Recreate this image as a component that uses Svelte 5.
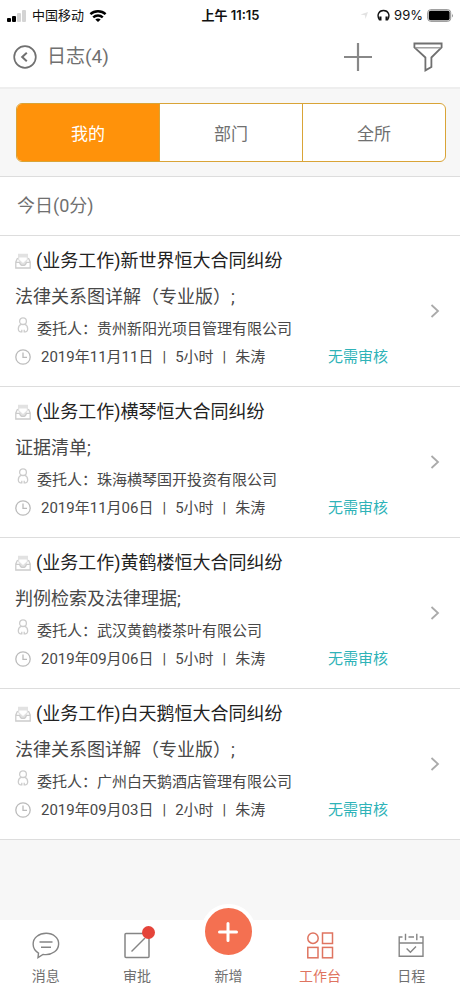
<script>
  const tabs = ['我的', '部门', '全所'];
  let active = $state(0);

  const logs = [
    { title: '(业务工作)新世界恒大合同纠纷', desc: '法律关系图详解（专业版）;', client: '贵州新阳光项目管理有限公司', date: '2019年11月11日', hours: '5小时' },
    { title: '(业务工作)横琴恒大合同纠纷', desc: '证据清单;', client: '珠海横琴国开投资有限公司', date: '2019年11月06日', hours: '5小时' },
    { title: '(业务工作)黄鹤楼恒大合同纠纷', desc: '判例检索及法律理据;', client: '武汉黄鹤楼茶叶有限公司', date: '2019年09月06日', hours: '5小时' },
    { title: '(业务工作)白天鹅恒大合同纠纷', desc: '法律关系图详解（专业版）;', client: '广州白天鹅酒店管理有限公司', date: '2019年09月03日', hours: '2小时' },
  ];
</script>

<div class="page">
  <div class="status">
    <div class="carrier">
      <svg width="20" height="14" viewBox="0 0 20 14">
        <rect x="0" y="9" width="4" height="4" rx="1" fill="#000" />
        <rect x="5" y="7" width="4" height="6" rx="1" fill="#000" />
        <rect x="10" y="4" width="4" height="9" rx="1" fill="#d4d4d4" />
        <rect x="15" y="1" width="4" height="12" rx="1" fill="#d4d4d4" />
      </svg>
      <span class="network">中国移动</span>
      <svg width="18" height="14" viewBox="0 0 18 14" fill="none" stroke="#000" stroke-width="2.4">
        <path d="M1.4 5.2C5.6 1.2 12.4 1.2 16.6 5.2" />
        <path d="M4.2 8.4C6.9 5.9 11.1 5.9 13.8 8.4" />
        <path d="M9 13 6.3 10.4C7.8 9.1 10.2 9.1 11.7 10.4Z" fill="#000" stroke="none" />
      </svg>
    </div>
    <div class="time">上午 11:15</div>
    <div class="power">
      <svg width="9" height="9" viewBox="0 0 9 9"><path d="M0.5 3.5 8 1 5.5 8 5 4.2Z" fill="#e2e2e2" /></svg>
      <svg class="phones" width="13" height="13" viewBox="0 0 13 13" fill="none" stroke="#111" stroke-width="1.4">
        <path d="M2.6 11C-.6 6.4 1.6 1.5 6.5 1.5S13.6 6.4 10.4 11" />
        <path d="M3.4 7.4v4M9.6 7.4v4" stroke-width="2.2" />
      </svg>
      <span>99%</span>
      <svg width="27" height="13" viewBox="0 0 27 13">
        <rect x=".7" y=".7" width="23" height="11.6" rx="3" fill="none" stroke="#8a8a8a" />
        <rect x="1.8" y="1.8" width="20.8" height="9.4" rx="1.8" fill="#000" />
        <path d="M25 4.5q1.6 2 0 4z" fill="#8a8a8a" />
      </svg>
    </div>
  </div>

  <header>
    <button aria-label="返回">
      <svg width="24" height="24" viewBox="0 0 24 24" fill="none" stroke="#707070">
        <circle cx="12" cy="12" r="10.8" stroke-width="1.7" />
        <path d="M13.8 7.8 9.2 12l4.6 4.2" stroke-width="2" />
      </svg>
    </button>
    <h1>日志(4)</h1>
    <button aria-label="新建">
      <svg width="28" height="28" viewBox="0 0 28 28" stroke="#888" stroke-width="2.2"><path d="M14 0v28M0 14h28" /></svg>
    </button>
    <button class="filter" aria-label="筛选">
      <svg width="30" height="30" viewBox="0 0 30 30" fill="none" stroke="#707070" stroke-width="1.8">
        <path d="M1.4 1.5H28.6V5.4L18.4 15.5V25L12.4 28.4V15.5L1.4 5.4Z" />
        <path d="M2.5 5.8H27.5" stroke="#999" stroke-width="1.4" />
      </svg>
    </button>
  </header>

  <div class="tabbar">
    <div class="tabs">
      {#each tabs as tab, i}
        <button class:active={active === i} onclick={() => (active = i)}>{tab}</button>
      {/each}
    </div>
  </div>

  <h2>今日(0分)</h2>

  <ul>
    {#each logs as log}
      <li>
        <div class="body">
          <div class="title">
            <svg width="16" height="16" viewBox="0 0 16 16" fill="none" stroke="#ccc" stroke-width="1.3">
              <path d="M3 6.5V.8h10v5.7L11 9.5Q10.5 12.2 8 12.2T5 9.5Z" fill="#e2e2e2" stroke="none" />
              <path d="M4.2 6.5V4.6h7.6v1.9L8 10Z" fill="#fff" stroke="none" />
              <path d="M2.6 5 .8 9v6h14.4V9l-1.8-4M1 9.3H4.6Q5.2 12.4 8 12.4T11.4 9.3H15" />
            </svg>
            <span>{log.title}</span>
          </div>
          <div class="desc">{log.desc}</div>
          <div class="client">
            <svg width="12" height="16" viewBox="0 0 12 16" fill="none" stroke="#ccc" stroke-width="1.3">
              <circle cx="6" cy="4.2" r="3.4" />
              <path d="M4.4 7.4C.6 8 .4 14.8 3.4 14.8H4.8V12.8M7.6 7.4C11.4 8 11.6 14.8 8.6 14.8H7.2V12.8M4.4 7.4H7.6" />
            </svg>
            <span>委托人：{log.client}</span>
          </div>
          <div class="meta">
            <svg width="16" height="16" viewBox="0 0 16 16" fill="none" stroke="#bbb" stroke-width="1.3">
              <circle cx="8" cy="8" r="7.2" />
              <path d="M8 3.4V8.4H12" />
            </svg>
            <span class="info"><span>{log.date}</span><span>|</span><span>{log.hours}</span><span>|</span><span>朱涛</span></span>
            <span class="review">无需审核</span>
          </div>
        </div>
        <svg class="go" width="10" height="14" viewBox="0 0 10 14" fill="none" stroke="#aaa" stroke-width="1.8"><path d="M1.5 1 8 7 1.5 13" /></svg>
      </li>
    {/each}
  </ul>

  <nav>
    <a href="#message">
      <svg width="28" height="28" viewBox="0 0 28 28" fill="none" stroke="#858585" stroke-width="1.4">
        <path d="M6.5 22.2C-1 17.6.2 8.8 5 5.2 10 1.2 18.4 1.2 23 5.2 28.2 9.4 27.6 17 22.6 20.8 19 23.5 14.6 24 11 23.4L6 26.6Z" />
        <path d="M7.5 11H20.5M9 16.2H19" />
      </svg>
      <span>消息</span>
    </a>
    <a href="#approve">
      <span class="icon">
        <svg width="28" height="28" viewBox="0 0 28 28" fill="none" stroke="#858585" stroke-width="1.5">
          <rect x="2" y="2.5" width="24" height="24" rx="1" />
          <path d="M8.5 20.5 22 7" />
        </svg>
        <i class="dot"></i>
      </span>
      <span>审批</span>
    </a>
    <a href="#add">
      <span class="icon">
        <span class="add">
          <svg width="20" height="20" viewBox="0 0 20 20" stroke="#fff" stroke-width="3" stroke-linecap="round"><path d="M10 1.5v17M1.5 10h17" /></svg>
        </span>
      </span>
      <span>新增</span>
    </a>
    <a href="#workbench" class="current">
      <svg width="28" height="28" viewBox="0 0 28 28" fill="none" stroke="#df7460" stroke-width="1.5">
        <circle cx="7" cy="7.2" r="5.2" />
        <rect x="16.5" y="2" width="10" height="10.5" />
        <rect x="1.8" y="16.4" width="10.2" height="10.4" />
        <rect x="16.5" y="16.4" width="10" height="10.4" />
      </svg>
      <span>工作台</span>
    </a>
    <a href="#calendar">
      <svg width="28" height="28" viewBox="0 0 28 28" fill="none" stroke="#858585" stroke-width="1.4">
        <path d="M5.5 6H2.2V25.2H26V6H22.7M11.5 6H17M2.2 12H26M8.5 2.8V9.2M19.8 2.8V9.2" />
        <path d="M9.6 17.4 13.4 21.2 19 15.6" />
      </svg>
      <span>日程</span>
    </a>
  </nav>
</div>

<style>
  :global(body) { margin: 0; background: #f7f7f7; }
  .page {
    min-height: 100vh;
    display: flex;
    flex-direction: column;
    font-family: Roboto, "Noto Sans CJK SC", sans-serif;
    color: #484848;
  }
  svg { display: block; flex: none; }
  button { border: 0; padding: 0; background: none; font: inherit; color: inherit; cursor: pointer; }

  .status {
    display: grid;
    grid-template-columns: 1fr auto 1fr;
    align-items: center;
    height: 31px;
    padding: 0 6px 0 7px;
    background: #fff;
    color: #111;
    font: 500 13px/31px Inter, "Noto Sans CJK SC", sans-serif;
  }
  .carrier, .power { display: flex; align-items: center; }
  .carrier { gap: 5px; }
  .network { font-weight: 400; }
  .time { font-weight: 600; }
  .power { justify-content: flex-end; gap: 4px; font-weight: 400; }
  .phones { margin-left: 4px; }

  header {
    display: flex;
    align-items: center;
    height: 52px;
    padding: 0 17px 4px 13px;
    background: #fff;
    border-bottom: 2px solid #eee;
  }
  h1 { flex: 1; margin: 0 0 0 10px; font-size: 19px; font-weight: 400; line-height: 24px; color: #707070; }
  .filter { margin-left: 41px; }

  .tabbar { padding: 14px 14px 14px 16px; border-bottom: 1px solid #ddd; }
  .tabs {
    display: flex;
    height: 59px;
    box-sizing: border-box;
    border: 1px solid #d9a437;
    border-radius: 6px;
    overflow: hidden;
    background: #fff;
  }
  .tabs button { flex: 1; font-size: 17px; color: #707070; }
  .tabs button + button { border-left: 1px solid #d9a437; }
  .tabs button.active { background: #ff920a; color: #fff; }

  h2 {
    margin: 0;
    padding: 0 17px;
    background: #fff;
    border-bottom: 1px solid #ddd;
    font-size: 18px;
    font-weight: 400;
    line-height: 58px;
    color: #707070;
  }

  ul { margin: 0; padding: 0; list-style: none; }
  li {
    display: flex;
    align-items: center;
    gap: 42px;
    padding: 7px 20px 15px 15px;
    background: #fff;
    border-bottom: 1px solid #ddd;
  }
  .body { flex: 1; min-width: 0; }
  .go { margin-top: 8px; }
  .title, .client, .meta { display: flex; align-items: center; }
  .title { gap: 5px; font-size: 18px; line-height: 36px; color: #222; }
  .desc { font-size: 18px; line-height: 36px; }
  .client { gap: 8px; padding-left: 2px; font-size: 15px; line-height: 28px; }
  .client svg { margin-bottom: 8px; }
  .meta { gap: 10px; font-size: 15px; line-height: 28px; }
  .info { display: flex; flex: 1; gap: 9px; }
  .review { color: #2fb3b8; }

  nav {
    display: flex;
    margin-top: auto;
    height: 76px;
    padding-right: 3px;
    background: #fff;
  }
  nav a {
    flex: 1;
    display: flex;
    flex-direction: column;
    align-items: center;
    gap: 6px;
    padding-top: 11px;
    font-size: 14px;
    line-height: 22px;
    color: #707070;
    text-decoration: none;
  }
  nav .current { color: #df7460; }
  .icon { position: relative; width: 28px; height: 28px; }
  .dot {
    position: absolute;
    top: -5px;
    right: -4px;
    width: 13px;
    height: 13px;
    border-radius: 50%;
    background: #e5443a;
  }
  .add {
    position: absolute;
    top: -27px;
    left: -14px;
    display: flex;
    align-items: center;
    justify-content: center;
    width: 47px;
    height: 47px;
    border: 4px solid #fff;
    border-radius: 50%;
    background: #f47051;
  }
</style>
